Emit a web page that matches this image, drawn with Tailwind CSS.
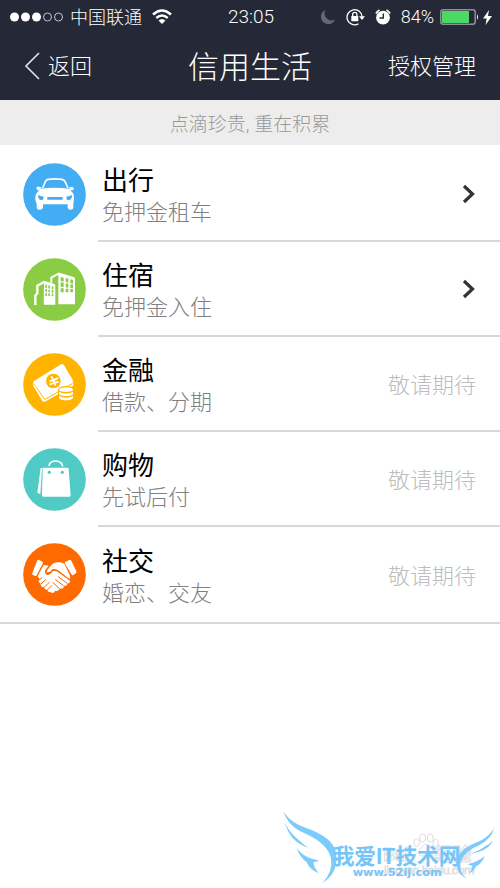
<!DOCTYPE html>
<html lang="zh-CN">
<head>
<meta charset="utf-8">
<meta name="viewport" content="width=device-width, initial-scale=1">
<title>信用生活</title>
<script src="https://cdn.jsdelivr.net/npm/@tailwindcss/browser@4"></script>
</head>
<body class="relative min-h-screen bg-white font-['Roboto','Noto_Sans_CJK_SC',sans-serif] font-light">
<header class="bg-[#252836] text-white">
  <div class="grid h-8 grid-cols-[1fr_auto_1fr] items-center pl-2.5 pr-2 text-lg leading-8">
    <div class="flex items-center gap-1.5">
      <svg class="h-3 w-[54px]" viewBox="0 0 54 12" fill="#fff" aria-hidden="true"><circle cx="4.5" cy="6" r="4.5"/><circle cx="15.5" cy="6" r="4.5"/><circle cx="26.5" cy="6" r="4.5"/><g fill="none" stroke="#c4c5ca"><circle cx="37.5" cy="6" r="4"/><circle cx="48.5" cy="6" r="4"/></g></svg>
      <span class="whitespace-nowrap pt-0.5">中国联通</span>
      <svg class="ml-1 h-4 w-5" viewBox="0 0 20 16" fill="none" stroke="#fff" stroke-width="2.4" aria-hidden="true"><path d="M1 5.5Q10-2.5 19 5.5M4.3 9Q10 3.8 15.7 9"/><path d="M6.5 11.5Q10 8.5 13.5 11.5L10 15Z" fill="#fff" stroke="none"/></svg>
    </div>
    <span class="text-[19px]">23:05</span>
    <div class="flex items-center justify-end">
      <svg class="mr-2.5 h-4 w-4" viewBox="0 0 16 16" fill="#656771" aria-hidden="true"><path d="M5.5 1A7.3 7.3 0 1 0 15 10.5A7 7 0 0 1 5.5 1Z"/></svg>
      <svg class="mr-2.5 h-[18px] w-[19px]" viewBox="0 0 19 18" aria-hidden="true"><path d="M12.5 15.8A7.6 7.6 0 1 1 16.2 9" fill="none" stroke="#fff" stroke-width="1.3"/><path d="M13 8.3h6l-3 3.8Z" fill="#fff"/><rect x="5.3" y="8" width="7" height="5.3" rx=".6" fill="#fff"/><path d="M6.7 8V6.4a2.1 2.1 0 0 1 4.2 0V8" fill="none" stroke="#fff" stroke-width="1.3"/></svg>
      <svg class="mr-2.5 h-4 w-4" viewBox="0 0 16 16" aria-hidden="true"><path d="M1 4.500A8 8 0 0 1 4.500 1M11.500 1A8 8 0 0 1 15 4.500" fill="none" stroke="#fff" stroke-width="1.800"/><circle cx="8" cy="8.700" r="6.900" fill="#fff"/><path d="M8.300 4.500V9H4.500" fill="none" stroke="#252836" stroke-width="1.400"/></svg>
      <span class="mr-1.5">84%</span>
      <svg class="mr-1 h-4 w-[39px]" viewBox="0 0 39 16" aria-hidden="true"><rect x=".8" y=".8" width="34.400" height="14.400" rx="2.500" fill="none" stroke="#8d8f98" stroke-width="1.500"/><rect x="2" y="2" width="27" height="12" rx="1" fill="#4cd864"/><path d="M37 5q2 3 0 6Z" fill="#fff"/></svg>
      <svg class="h-[15px] w-[9px]" viewBox="0 0 9 15" fill="#fff" aria-hidden="true"><path d="M6 0L0 8.500h3.700L2.500 15L9 6H5Z"/></svg>
    </div>
  </div>
  <div class="grid h-[68px] grid-cols-[1fr_auto_1fr] items-center pl-6 pr-6 text-[22px]">
    <a href="#" class="flex items-center gap-2">
      <svg class="h-7 w-4" viewBox="0 0 16 28" fill="none" stroke="#e4e4e7" stroke-width="1.600" aria-hidden="true"><path d="M15 1L2 14L15 27"/></svg>
      <span>返回</span>
    </a>
    <h1 class="whitespace-nowrap pt-1 text-[31px]">信用生活</h1>
    <a href="#" class="justify-self-end whitespace-nowrap">授权管理</a>
  </div>
</header>
<main class="font-normal">
  <p class="h-[45px] bg-[#ededed] pt-0.5 text-center text-[19px] leading-[45px] font-light text-[#999]">点滴珍贵, 重在积累</p>
  <ul class="pt-0.5">
    <li>
      <a href="#" class="flex h-[95px] items-center pl-[23px]">
        <svg class="mr-3 h-[63px] w-[63px] shrink-0" viewBox="39 37 189 189" aria-hidden="true"><circle cx="133.500" cy="131.500" r="94" fill="#43adf4"/><path d="M98 112L107 91Q109 87 114 86Q134 83 156 86Q161 87 164 91L174 112" fill="none" stroke="#fff" stroke-width="5"/><path d="M92 114Q134 109 178 114L189 128Q193 133 192 143L190 161V169Q190 177 182 177Q173 177 173 169V161H99V169Q98 177 89 177Q80 177 80 169V160L76 148Q75 132 81 126Z" fill="#fff"/><path d="M79 113Q80 107 87 108L95 111L91 119H82ZM177 111L185 108Q192 109 192 115L188 119H181Z" fill="#fff"/><path d="M84 133L102 139L98 148H92Q85 146 84 133ZM187 133L168 139L172 148H178Q185 146 187 133ZM112 139H158V147H112Z" fill="#43adf4"/></svg>
        <span class="flex h-full flex-1 items-center border-b-2 border-[#d8d8d8] pl-1 pr-6"><span class="flex-1 pt-1.5"><span class="block text-[26px] leading-8 text-black">出行</span><span class="block text-[22px] leading-8 font-light text-[#808080]">免押金租车</span></span>
        <svg class="h-5 w-3.5" viewBox="0 0 14 20" fill="none" stroke="#333" stroke-width="3.200" aria-hidden="true"><path d="M2 2L10.500 10L2 18"/></svg></span>
      </a>
    </li>
    <li>
      <a href="#" class="flex h-[95px] items-center pl-[23px]">
        <svg class="mr-3 h-[63px] w-[63px] shrink-0" viewBox="39 38 189 189" aria-hidden="true"><circle cx="133.500" cy="132.500" r="94" fill="#8acc43"/><path d="M76 179V151L82 144V121L102 110L134 120" fill="none" stroke="#fff" stroke-width="7"/><path d="M102 108L136 120V178H101Z" fill="#fff"/><path d="M124 112V97L146 85L193 99" fill="none" stroke="#fff" stroke-width="6"/><path d="M145 83L195 99V177H145Z" fill="#fff"/><g fill="#8acc43"><path d="M152 95l9 2v12l-9-2zM167 98l8 2v12l-8-2zM181 102l8 2v11l-8-2zM152 111l9 1v13l-9-1zM167 114l8 1v12l-8-1zM181 117l8 1v11l-8-1zM152 129h9v12h-9zM167 130h8v11h-8zM181 131h8v10h-8z"/><path d="M106 117l5 2v9l-5-1zM115 120l5 1v9l-5-1zM125 123l5 1v8l-5-1zM106 131h5v9h-5zM115 133h5v8h-5zM125 134h5v8h-5zM106 144h5v8h-5zM115 144h5v8h-5zM125 145h5v7h-5z"/></g></svg>
        <span class="flex h-full flex-1 items-center border-b-2 border-[#d8d8d8] pl-1 pr-6"><span class="flex-1 pt-1.5"><span class="block text-[26px] leading-8 text-black">住宿</span><span class="block text-[22px] leading-8 font-light text-[#808080]">免押金入住</span></span>
        <svg class="h-5 w-3.5" viewBox="0 0 14 20" fill="none" stroke="#333" stroke-width="3.200" aria-hidden="true"><path d="M2 2L10.500 10L2 18"/></svg></span>
      </a>
    </li>
    <li class="flex h-[95px] items-center pl-[23px]">
      <svg class="mr-3 h-[63px] w-[63px] shrink-0" viewBox="39 39 189 189" aria-hidden="true"><circle cx="133.500" cy="133.500" r="94" fill="#ffb400"/><path d="M71 127Q69 130 70 138L97 183Q101 187 107 184L190 137V126" fill="#fff"/><path d="M73 132L102 176Q105 179 109 176L188 130" fill="none" stroke="#ffb400" stroke-width="3"/><path d="M72 123L153 73Q158 70 162 76L188 119Q190 124 186 127L111 171Q106 174 102 169L71 130Q68 126 72 123Z" fill="#fff"/><circle cx="130" cy="123" r="22" fill="#ffb400"/><path d="M124 108L130 121L145 113M130 121L137 137M118 124L141 117M119 133L146 125" fill="none" stroke="#fff" stroke-width="5"/><path d="M144 149Q146 138 168 138Q191 138 193 149V174Q190 184 168 184Q147 183 144 174Z" fill="#ffb400"/><g fill="#fff"><ellipse cx="168" cy="149" rx="21" ry="7"/><path d="M147 155Q168 166 189 155V162Q185 168 168 168Q151 168 147 162ZM147 168Q168 178 189 168V174Q185 181 168 181Q151 181 147 174Z"/></g></svg>
      <div class="flex h-full flex-1 items-center border-b-2 border-[#d8d8d8] pl-1 pr-6"><div class="flex-1 pt-1.5"><h2 class="text-[26px] leading-8 text-black">金融</h2><p class="text-[22px] leading-8 font-light text-[#808080]">借款、分期</p></div><span class="pt-1 text-[22px] font-light text-[#bdbdbd]">敬请期待</span></div>
    </li>
    <li class="flex h-[95px] items-center pl-[23px]">
      <svg class="mr-3 h-[63px] w-[63px] shrink-0" viewBox="39 39 189 189" aria-hidden="true"><circle cx="133.500" cy="133.500" r="94" fill="#50cac5"/><path d="M117 93Q119 78 137 78Q156 79 158 94" fill="none" stroke="#fff" stroke-width="5"/><path d="M101 98H172Q176 98 176 102L182 181Q182 185 178 185H100Q96 185 96 181L98 102Q98 98 101 98ZM92 99H98L92 178L82 173Z" fill="#fff"/><path d="M97 101L92 179" stroke="#50cac5" stroke-width="2"/><circle cx="118" cy="112" r="5" fill="#50cac5"/><circle cx="157" cy="112" r="5" fill="#50cac5"/></svg>
      <div class="flex h-full flex-1 items-center border-b-2 border-[#d8d8d8] pl-1 pr-6"><div class="flex-1 pt-1.5"><h2 class="text-[26px] leading-8 text-black">购物</h2><p class="text-[22px] leading-8 font-light text-[#808080]">先试后付</p></div><span class="pt-1 text-[22px] font-light text-[#bdbdbd]">敬请期待</span></div>
    </li>
    <li class="flex h-[97px] items-center border-b-2 border-[#d8d8d8] pl-[23px]">
      <svg class="mr-3 h-[63px] w-[63px] shrink-0" viewBox="39 41 189 189" aria-hidden="true"><circle cx="133.500" cy="135.500" r="94" fill="#ff6900"/><g fill="#fff"><path d="M82 93Q84 90 88 92L97 97Q100 99 98 103L80 138Q78 141 74 139L68 136Q65 134 67 130ZM167 97L178 92Q182 90 184 94L199 126Q201 130 197 132L190 137Q186 139 184 135L165 103Q163 99 167 97Z"/><path d="M101 107L116 109L106 122Q102 134 112 137Q121 137 129 124Q141 124 148 131L181 155Q178 164 172 161Q174 170 162 170Q161 180 149 178Q145 187 136 184Q130 195 121 188Q113 190 112 181Q103 182 101 173Q91 173 92 163Q83 158 88 148L83 141Z"/><path d="M128 103Q145 95 163 103L180 139Q182 145 178 150L148 126Q139 119 128 119Q120 133 110 130Q108 124 128 103Z"/></g><g fill="none" stroke="#ff6900" stroke-width="3" stroke-linecap="round"><path d="M145 142L170 161M137 151L160 169M129 160L148 177M88 151L95 146M94 163L107 151M103 173L118 159M113 181L125 169M129 120Q121 133 111 131M130 121Q141 120 150 129L178 151"/></g></svg>
      <div class="flex h-full flex-1 items-center pl-1 pr-6"><div class="flex-1 pt-1.5"><h2 class="text-[26px] leading-8 text-black">社交</h2><p class="text-[22px] leading-8 font-light text-[#808080]">婚恋、交友</p></div><span class="pt-1 text-[22px] font-light text-[#bdbdbd]">敬请期待</span></div>
    </li>
  </ul>
</main>
<footer class="absolute bottom-0 right-0">
  <svg class="h-[88px] w-[230px] font-['Roboto','Noto_Sans_CJK_SC',sans-serif]" viewBox="0 0 690 264">
    <g fill="#fff" stroke="#dedede" stroke-width="3"><ellipse cx="440" cy="128" rx="8" ry="12"/><ellipse cx="458" cy="114" rx="9" ry="12"/><ellipse cx="481" cy="114" rx="9" ry="12"/><ellipse cx="497" cy="130" rx="8" ry="12"/><path d="M467 132Q477 133 486 148Q498 164 482 168H454Q439 164 451 148Q459 133 467 132Z"/>
    <text x="340" y="184" font-size="54" font-weight="700">Bai</text><text x="492" y="184" font-size="56" font-weight="700">经验</text><text x="342" y="222" font-size="34">jingyan.baidu.com</text></g>
    <g fill="#7dcbfb">
      <path d="M41 35Q61 68 107 83Q190 112 198 158Q207 218 158 248Q190 214 183 176Q175 132 104 100Q54 78 41 35Z"/>
      <path d="M44 67Q60 102 92 125Q102 135 116 143Q62 130 44 67Z"/>
      <path d="M80 145Q98 167 119 174L148 182L130 187Q132 203 146 220Q119 209 110 187Q90 173 80 145Z"/>
      <path d="M673 85Q662 120 625 137Q574 158 571 194Q570 222 592 236Q556 220 561 182Q567 146 623 126Q653 114 673 85Z"/>
      <path d="M669 122Q654 153 601 161Q630 152 645 139Q657 133 669 122ZM644 168Q636 191 618 199Q612 214 598 220Q607 206 607 197L592 193Q622 187 644 168Z"/>
    </g>
    <g fill="#75c5f8"><text x="188" y="192" font-size="65" font-weight="700">我爱IT技术网</text><text x="248" y="229" font-size="34" font-weight="700" font-family="DejaVu Sans">www.52ij.com</text></g>
  </svg>
</footer>
</body>
</html>
